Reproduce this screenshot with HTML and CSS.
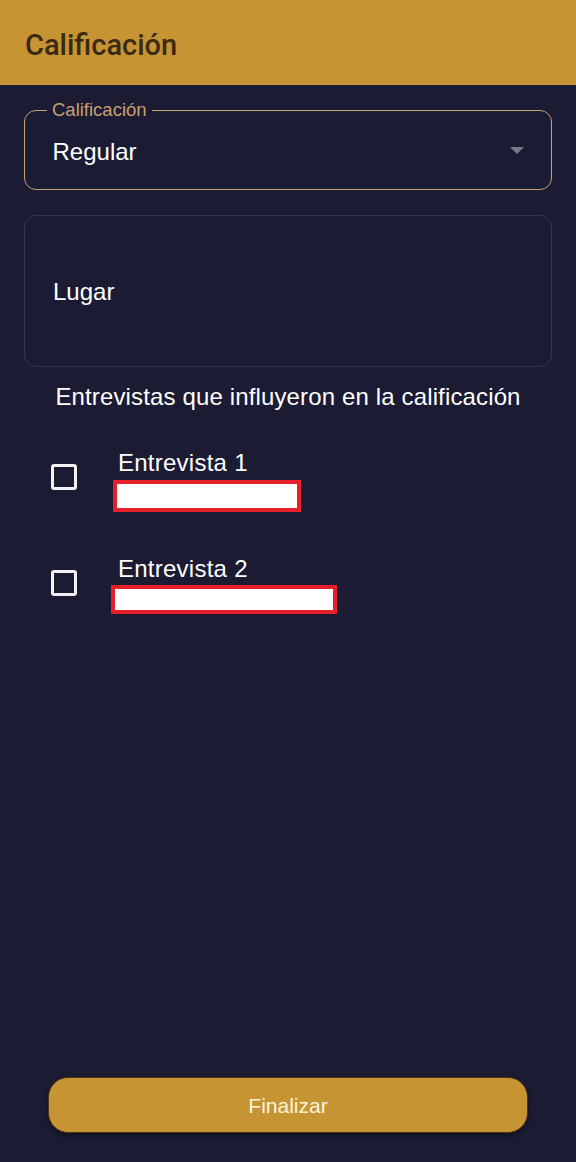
FILE: index.html
```html
<!DOCTYPE html>
<html lang="es">
<head>
<meta charset="utf-8">
<title>Calificación</title>
<link rel="stylesheet" href="styles.css">
</head>
<body>
<div class="app">
  <header class="appbar"><h1 class="title">Calificación</h1></header>
  <main class="content">
    <div class="select-field">
      <span class="select-label">Calificación</span>
      <span class="select-value">Regular</span>
      <span class="select-arrow"></span>
    </div>
    <div class="text-field"><span class="text-value">Lugar</span></div>
    <h2 class="section-title">Entrevistas que influyeron en la calificación</h2>
    <div class="list">
      <div class="item">
        <span class="checkbox"></span>
        <div class="item-text">
          <span class="item-title">Entrevista 1</span>
          <span class="redact redact-1"></span>
        </div>
      </div>
      <div class="item">
        <span class="checkbox"></span>
        <div class="item-text">
          <span class="item-title">Entrevista 2</span>
          <span class="redact redact-2"></span>
        </div>
      </div>
    </div>
  </main>
  <footer class="footer"><button class="btn">Finalizar</button></footer>
</div>
</body>
</html>
```
FILE: styles.css
```css
* { box-sizing: border-box; }
html, body { margin: 0; padding: 0; }
body { background: #1b1b33; font-family: "Liberation Sans", Arial, sans-serif; color: #fff; }
.app { width: 576px; height: 1162px; display: flex; flex-direction: column; }
.appbar { height: 85px; background: #c69432; display: flex; align-items: center; padding: 0 25px; }
.title { margin: 0; font-family: Roboto, sans-serif; font-weight: 500; font-size: 29px; color: #3a2a12; padding-top: 5px; }
.content { flex: 1; padding: 25px 24px 0; display: flex; flex-direction: column; }
.select-field { position: relative; height: 80px; border: 1.5px solid #c9a070; border-radius: 12px; display: flex; align-items: center; padding: 0 28px 0 27.5px; }
.select-label { position: absolute; top: -12px; left: 22px; padding: 0 5px; background: #1b1b33; font-size: 18.5px; color: #c9a070; line-height: 22px; }
.select-value { font-size: 24px; flex: 1; padding-top: 4px; }
.select-arrow { width: 0; height: 0; border-left: 7px solid transparent; border-right: 7px solid transparent; border-top: 7px solid #77788a; margin-right: -1px; }
.text-field { margin-top: 25px; height: 152px; border: 1px solid #353650; border-radius: 12px; display: flex; align-items: center; padding: 0 28px; }
.text-value { font-size: 24px; padding-top: 2px; }
.section-title { margin: 16px 0 0; text-align: center; font-size: 24px; font-weight: 400; line-height: 28px; letter-spacing: 0.14px; }
.list { display: flex; flex-direction: column; gap: 43px; margin-top: 38px; }
.item { display: flex; align-items: flex-start; }
.checkbox { width: 26px; height: 26px; border: 3px solid #f2f2f2; border-radius: 3px; margin: 15px 0 0 27px; flex: none; }
.item-text { display: flex; flex-direction: column; margin-left: 41px; }
.item-title { font-size: 24px; line-height: 28px; letter-spacing: 0.25px; }
.redact { display: block; background: #fff; border: 4.5px solid #e5202a; height: 32px; margin-left: -5px; margin-top: 3px; }
.redact-1 { width: 188px; }
.redact-2 { width: 226px; margin-left: -7px; height: 29px; margin-top: 2px; }
.footer { padding: 0 48px 29px; }
.btn { width: 100%; height: 56px; background: #c69432; border: 1px solid #4a3418; border-radius: 20px; color: #fdf3dc; font-family: "Liberation Sans", Arial, sans-serif; font-size: 21px; box-shadow: 0 2px 5px rgba(0,0,0,0.45); padding-top: 3px; }
```
